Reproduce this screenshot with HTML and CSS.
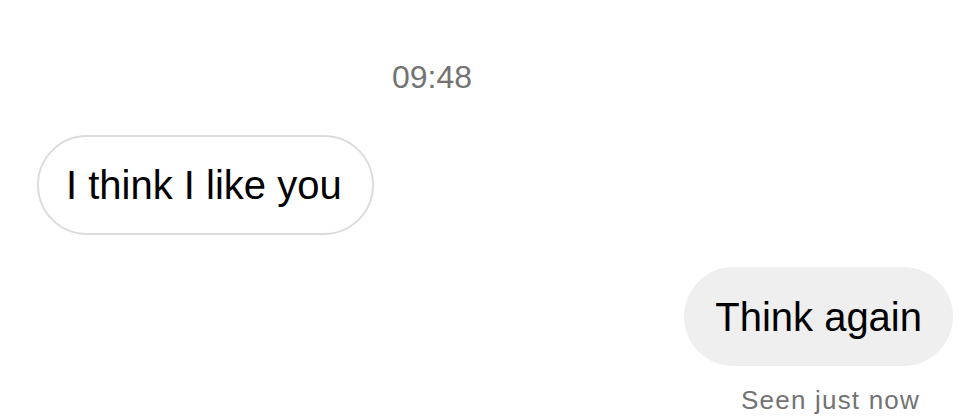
FILE: index.html
```html
<!DOCTYPE html>
<html lang="en">
<head>
  <meta charset="UTF-8">
  <title>Messages</title>
  <meta name="viewport" content="width=device-width, initial-scale=1.0">
  <link rel="stylesheet" href="styles.css">
</head>
<body>
  <div class="thread">
    <div class="timestamp">09:48</div>

    <div class="row incoming">
      <div class="bubble">I think I like you</div>
    </div>

    <div class="row outgoing">
      <div class="bubble">Think again</div>
    </div>

    <div class="seen">Seen just now</div>
  </div>
</body>
</html>
```

FILE: styles.css
```css
body {
  margin: 0;
  background: #fff;
  font-family: "Liberation Sans", Arial, sans-serif;
  color: #000;
}
.thread {
  display: flex;
  flex-direction: column;
  padding-top: 58px;
}
.timestamp {
  align-self: center;
  font-size: 32px;
  line-height: 38px;
  color: #737373;
  margin-right: 108px;
}
.row {
  display: flex;
}
.incoming {
  margin-top: 39px;
  padding-left: 37px;
}
.outgoing {
  margin-top: 32px;
  justify-content: flex-end;
  padding-right: 19px;
}
.bubble {
  display: flex;
  align-items: center;
  box-sizing: border-box;
  height: 100px;
  padding: 0 30px;
  border-radius: 50px;
  font-size: 40px;
  line-height: 1;
}
.incoming .bubble {
  border: 2px solid #dcdcdc;
  background: #fff;
  padding: 0 30px 0 27px;
}
.outgoing .bubble {
  background: #efefef;
  height: 99px;
  padding: 0 31px;
}
.seen {
  align-self: flex-end;
  margin-top: 19px;
  margin-right: 52px;
  font-size: 26px;
  line-height: 30px;
  letter-spacing: 1.2px;
  color: #737373;
}
```
